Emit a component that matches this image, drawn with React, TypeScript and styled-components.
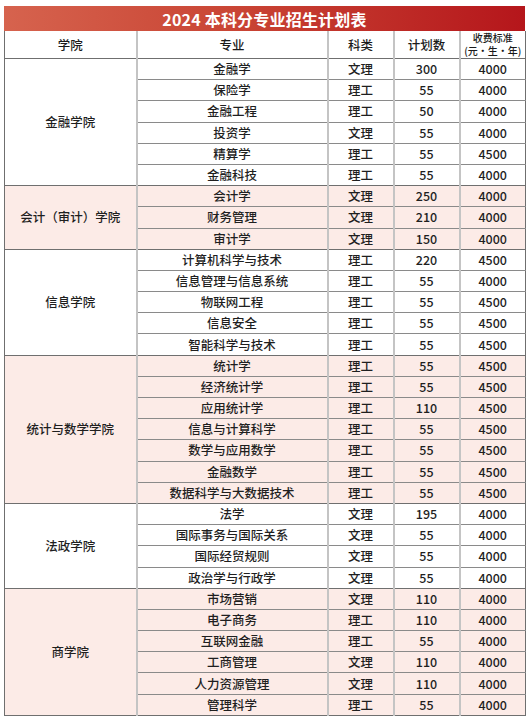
import React from 'react';
import styled, { createGlobalStyle } from 'styled-components';

interface Major {
  name: string;
  kind: string;
  plan: number;
  fee: number;
}

interface College {
  name: string;
  tinted: boolean;
  majors: Major[];
}

const colleges: College[] = [
  {
    name: '金融学院',
    tinted: false,
    majors: [
      { name: '金融学', kind: '文理', plan: 300, fee: 4000 },
      { name: '保险学', kind: '理工', plan: 55, fee: 4000 },
      { name: '金融工程', kind: '理工', plan: 50, fee: 4000 },
      { name: '投资学', kind: '文理', plan: 55, fee: 4000 },
      { name: '精算学', kind: '理工', plan: 55, fee: 4500 },
      { name: '金融科技', kind: '理工', plan: 55, fee: 4000 },
    ],
  },
  {
    name: '会计（审计）学院',
    tinted: true,
    majors: [
      { name: '会计学', kind: '文理', plan: 250, fee: 4000 },
      { name: '财务管理', kind: '文理', plan: 210, fee: 4000 },
      { name: '审计学', kind: '文理', plan: 150, fee: 4000 },
    ],
  },
  {
    name: '信息学院',
    tinted: false,
    majors: [
      { name: '计算机科学与技术', kind: '理工', plan: 220, fee: 4500 },
      { name: '信息管理与信息系统', kind: '理工', plan: 55, fee: 4000 },
      { name: '物联网工程', kind: '理工', plan: 55, fee: 4500 },
      { name: '信息安全', kind: '理工', plan: 55, fee: 4500 },
      { name: '智能科学与技术', kind: '理工', plan: 55, fee: 4500 },
    ],
  },
  {
    name: '统计与数学学院',
    tinted: true,
    majors: [
      { name: '统计学', kind: '理工', plan: 55, fee: 4500 },
      { name: '经济统计学', kind: '理工', plan: 55, fee: 4500 },
      { name: '应用统计学', kind: '理工', plan: 110, fee: 4500 },
      { name: '信息与计算科学', kind: '理工', plan: 55, fee: 4500 },
      { name: '数学与应用数学', kind: '理工', plan: 55, fee: 4500 },
      { name: '金融数学', kind: '理工', plan: 55, fee: 4500 },
      { name: '数据科学与大数据技术', kind: '理工', plan: 55, fee: 4500 },
    ],
  },
  {
    name: '法政学院',
    tinted: false,
    majors: [
      { name: '法学', kind: '文理', plan: 195, fee: 4000 },
      { name: '国际事务与国际关系', kind: '文理', plan: 55, fee: 4000 },
      { name: '国际经贸规则', kind: '文理', plan: 55, fee: 4000 },
      { name: '政治学与行政学', kind: '文理', plan: 55, fee: 4000 },
    ],
  },
  {
    name: '商学院',
    tinted: true,
    majors: [
      { name: '市场营销', kind: '文理', plan: 110, fee: 4000 },
      { name: '电子商务', kind: '理工', plan: 110, fee: 4000 },
      { name: '互联网金融', kind: '理工', plan: 55, fee: 4000 },
      { name: '工商管理', kind: '文理', plan: 110, fee: 4000 },
      { name: '人力资源管理', kind: '文理', plan: 110, fee: 4000 },
      { name: '管理科学', kind: '理工', plan: 55, fee: 4000 },
    ],
  },
];

const GlobalStyle = createGlobalStyle`
  html, body {
    margin: 0;
    padding: 0;
    background: #ffffff;
  }
  body {
    font-family: "Noto Sans CJK SC", "Noto Sans", sans-serif;
    color: #1f1f1f;
  }
`;

const Page = styled.div`
  padding: 6px 4px 0 4px;
  width: 521px;
`;

const TitleBar = styled.div`
  height: 25px;
  display: flex;
  align-items: center;
  justify-content: center;
  background: linear-gradient(90deg, #d6634e 0%, #c94434 45%, #b5161b 100%);
  color: #ffffff;
  font-size: 16px;
  font-weight: 700;
  letter-spacing: 0.2px;
`;

const Table = styled.table`
  width: 521px;
  border-collapse: collapse;
  table-layout: fixed;
  border-left: 1px solid #6f6f6f;
  border-right: 1px solid #6f6f6f;
  border-bottom: 1px solid #6f6f6f;
`;

const HeadCell = styled.th`
  height: 27px;
  padding: 0;
  font-size: 12.5px;
  line-height: 14px;
  font-weight: 500;
  color: #1a1a1a;
  text-align: center;
  border-right: 2px solid #c4c4c4;
  border-bottom: 1px solid #6f6f6f;
  &:last-child {
    border-right: none;
  }
`;

const HeadStack = styled.div`
  display: flex;
  flex-direction: column;
  align-items: center;
  gap: 1px;
`;

const HeadLine = styled.span`
  font-size: 10px;
  line-height: 12px;
  white-space: nowrap;
`;

const Row = styled.tr<{ $tinted: boolean; $groupStart: boolean }>`
  height: 21.2px;
  background: ${p => (p.$tinted ? '#fcebe7' : '#ffffff')};
  border-top: 1px solid ${p => (p.$groupStart ? '#6f6f6f' : '#8a8a8a')};
`;

const Cell = styled.td`
  padding: 0;
  font-size: 12.5px;
  line-height: 14px;
  font-weight: 500;
  text-align: center;
  color: #1f1f1f;
  border-right: 2px solid #c4c4c4;
  white-space: nowrap;
  &:last-child {
    border-right: none;
  }
`;

export default function App() {
  return (
    <Page>
      <GlobalStyle />
      <TitleBar>2024 本科分专业招生计划表</TitleBar>
      <Table>
        <colgroup>
          <col style={{ width: 132 }} />
          <col style={{ width: 191 }} />
          <col style={{ width: 66 }} />
          <col style={{ width: 66 }} />
          <col style={{ width: 66 }} />
        </colgroup>
        <thead>
          <tr>
            <HeadCell>学院</HeadCell>
            <HeadCell>专业</HeadCell>
            <HeadCell>科类</HeadCell>
            <HeadCell>计划数</HeadCell>
            <HeadCell>
              <HeadStack>
                <HeadLine>收费标准</HeadLine>
                <HeadLine>(元·生·年)</HeadLine>
              </HeadStack>
            </HeadCell>
          </tr>
        </thead>
        <tbody>
          {colleges.map(college =>
            college.majors.map((m, i) => (
              <Row key={college.name + m.name} $tinted={college.tinted} $groupStart={i === 0}>
                {i === 0 && <Cell rowSpan={college.majors.length}>{college.name}</Cell>}
                <Cell>{m.name}</Cell>
                <Cell>{m.kind}</Cell>
                <Cell>{m.plan}</Cell>
                <Cell>{m.fee}</Cell>
              </Row>
            ))
          )}
        </tbody>
      </Table>
    </Page>
  );
}
